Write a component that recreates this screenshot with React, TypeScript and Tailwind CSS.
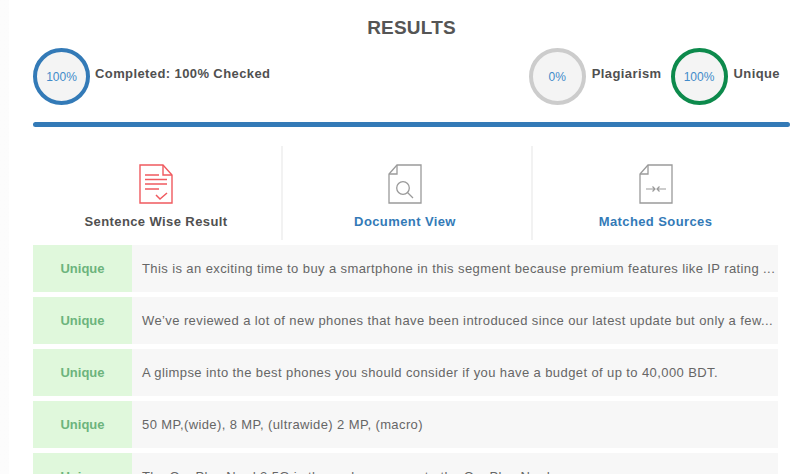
const rows = [
  "This is an exciting time to buy a smartphone in this segment because premium features like IP rating ...",
  "We’ve reviewed a lot of new phones that have been introduced since our latest update but only a few...",
  "A glimpse into the best phones you should consider if you have a budget of up to 40,000 BDT.",
  "50 MP,(wide), 8 MP, (ultrawide) 2 MP, (macro)",
  "The OnePlus Nord 2 5G is the real successor to the OnePlus Nord",
];

function Circle({ value, border }: { value: string; border: string }) {
  return (
    <div className={`flex h-[57px] w-[57px] shrink-0 items-center justify-center rounded-full border-[4px] bg-[#f4f4f4] pt-[1px] text-[12px] text-[#428bca] ${border}`}>
      {value}
    </div>
  );
}

function SentenceIcon() {
  return (
    <svg width="34" height="40" viewBox="0 0 34 40" fill="none" stroke="#f05a5f" strokeWidth="1.4">
      <path d="M1 1H24L33 11V39H1Z" />
      <path d="M24 1V11H33" />
      <path d="M6 11H20M6 15.500H28M6 20H28M6 25H20" strokeWidth="1.5" />
      <path d="M17 31L21 35L28 29" strokeWidth="1.500" />
    </svg>
  );
}

function DocumentIcon() {
  return (
    <svg width="34" height="40" viewBox="0 0 34 40" fill="none" stroke="#9a9a9a" strokeWidth="1.3">
      <path d="M9 1H33V39H1V10Z" />
      <path d="M9 1V10H1" />
      <circle cx="15" cy="24" r="6.300" />
      <path d="M19.500 28.500L25 34" />
    </svg>
  );
}

function MatchIcon() {
  return (
    <svg width="34" height="40" viewBox="0 0 34 40" fill="none" stroke="#9a9a9a" strokeWidth="1.3">
      <path d="M9 1H33V39H1V10Z" />
      <path d="M9 1V10H1" />
      <path d="M7 25H16M13.500 22.500L16 25L13.500 27.500M27 25H18M20.500 22.500L18 25L20.500 27.500" strokeWidth="1.200" />
    </svg>
  );
}

export default function App() {
  return (
    <div className="h-[474px] overflow-hidden bg-linear-to-r from-[#fcfcfc] to-[#f2f2f2] pl-[9px] font-['Liberation_Sans',Arial,sans-serif]">
      <div className="h-full bg-white pl-[24px] pt-[16px]">
        <h2 className="h-[23px] text-center text-[19px] font-bold leading-[23px] tracking-[0.2px] text-[#555555]">RESULTS</h2>

        <div className="mt-[9px] flex h-[57px] items-center pr-[10px]">
          <Circle value="100%" border="border-[#337ab7]" />
          <span className="mb-[5px] ml-[5px] text-[13px] font-bold tracking-[0.4px] text-[#505050]">Completed: 100% Checked</span>
          <div className="ml-auto flex items-center">
            <Circle value="0%" border="border-[#cccccc]" />
            <span className="mb-[5px] ml-[6px] text-[13px] font-bold tracking-[0.4px] text-[#505050]">Plagiarism</span>
            <div className="ml-[9px]">
              <Circle value="100%" border="border-[#0d8a4c]" />
            </div>
            <span className="mb-[5px] ml-[6px] text-[13px] font-bold tracking-[0.4px] text-[#505050]">Unique</span>
          </div>
        </div>

        <div className="mt-[17px] h-[5px] rounded-full bg-[#337ab7]" />

        <div className="mt-[19px] mr-[12px] flex h-[94px]">
          <div className="flex w-[250px] flex-col items-center border-r-2 border-[#f2f2f2] pr-[2px] pt-[18px]">
            <SentenceIcon />
            <span className="mt-[8px] text-[13px] font-bold tracking-[0.4px] text-[#505050]">Sentence Wise Result</span>
          </div>
          <div className="flex w-[250px] flex-col items-center border-r-2 border-[#f2f2f2] pr-[4px] pt-[18px]">
            <DocumentIcon />
            <span className="mt-[8px] text-[13px] font-bold tracking-[0.4px] text-[#337ab7]">Document View</span>
          </div>
          <div className="flex flex-1 flex-col items-center pt-[18px]">
            <MatchIcon />
            <span className="mt-[8px] text-[13px] font-bold tracking-[0.4px] text-[#337ab7]">Matched Sources</span>
          </div>
        </div>

        <div className="mt-[5px] mr-[12px] flex flex-col gap-[5px]">
          {rows.map((text, i) => (
            <div key={i} className="flex h-[47px] shrink-0">
              <div className="flex w-[99px] shrink-0 items-center justify-center bg-[#e0f8dc] text-[13px] font-bold text-[#6cb47c]">
                Unique
              </div>
              <div className="flex min-w-0 flex-1 items-center whitespace-nowrap bg-[#f7f7f7] pl-[10px] text-[13px] tracking-[0.4px] text-[#666666]">
                {text}
              </div>
            </div>
          ))}
        </div>
      </div>
    </div>
  );
}
